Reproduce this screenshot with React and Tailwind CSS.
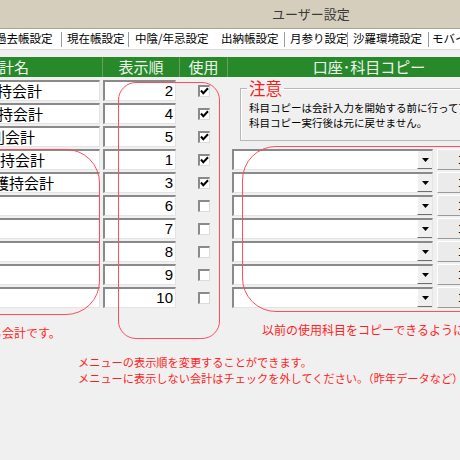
const rows = [
  { name: '本堂維持会計', shift: '-ml-[10px]', order: 2, used: true },
  { name: '墓地維持会計', shift: '-ml-[9px]', order: 4, used: true },
  { name: '特別会計', shift: 'ml-[13px]', order: 5, used: true },
  { name: '寺院維持会計', shift: '-ml-[7px]', order: 1, used: true },
  { name: '本山護持会計', shift: 'ml-[2px]', order: 3, used: true },
  { name: '', shift: '', order: 6, used: false },
  { name: '', shift: '', order: 7, used: false },
  { name: '', shift: '', order: 8, used: false },
  { name: '', shift: '', order: 9, used: false },
  { name: '', shift: '', order: 10, used: false },
]

const sunken =
  'bg-white border-t-2 border-l-2 border-b border-r border-t-[#8a8a8a] border-l-[#8a8a8a] border-b-[#e4e4e4] border-r-[#e4e4e4]'

const Sep = () => <span className="w-px h-[15px] bg-[#9c9c9c] shrink-0" />

const Check = ({ on }) => (
  <span className="w-[12px] h-[12px] bg-white border-t-2 border-l-2 border-b border-r border-t-[#8a8a8a] border-l-[#8a8a8a] border-b-[#dcdcdc] border-r-[#dcdcdc] flex items-center justify-center">
    {on && (
      <svg width="9" height="8" viewBox="0 0 9 8">
        <path d="M1 3.5 L3.3 6.3 L8 1.2" stroke="#000" strokeWidth="2" fill="none" />
      </svg>
    )}
  </span>
)

const Combo = () => (
  <div className="col-start-4 flex">
    <div className={`w-[201px] h-[21px] flex justify-end ${sunken}`}>
      <div className="w-[15px] h-full bg-[#f0f0f0] border-l border-b border-l-white border-b-[#6e6e6e] flex items-center justify-center">
        <svg width="7" height="4" viewBox="0 0 7 4">
          <path d="M0 0H7L3.5 4Z" fill="#000" />
        </svg>
      </div>
    </div>
    <button className="ml-[4px] w-[60px] h-[21px] bg-[#ebebeb] border-t border-l border-b border-r border-t-white border-l-white border-b-[#9a9a9a] border-r-[#9a9a9a] pl-[19px] text-left text-[12px] leading-none">
      コピー
    </button>
  </div>
)

export default function App() {
  return (
    <div className="relative w-[460px] h-[460px] overflow-hidden bg-[#f0f0f0] text-black font-['Noto_Sans_CJK_JP',sans-serif]">
      {/* title bar */}
      <div className="h-[29px] bg-[#d5cebc] border-b border-b-[#aaa493] flex items-center pl-[272px] text-[13px] text-[#3a3a3a]">
        ユーザー設定
      </div>

      {/* tabs */}
      <div className="h-[21px] bg-white border-b border-b-[#dadada] flex items-center text-[11.5px] whitespace-nowrap">
        <span className="-ml-[5px] w-[66px] shrink-0">過去帳設定</span>
        <Sep />
        <span className="w-[66px] pl-[5px] shrink-0">現在帳設定</span>
        <Sep />
        <span className="w-[86px] pl-[6px] shrink-0">中陰/年忌設定</span>
        <span className="w-[69px] pl-[6px] shrink-0">出納帳設定</span>
        <Sep />
        <span className="w-[62px] pl-[5px] shrink-0">月参り設定</span>
        <Sep />
        <span className="w-[80px] pl-[5px] shrink-0">沙羅環境設定</span>
        <Sep />
        <span className="pl-[3px] shrink-0">モバイル設定</span>
      </div>

      {/* column header */}
      <div className="-ml-[40px] mt-[7px] h-[20px] flex items-center bg-[#28892a] text-[15px] text-[#eef6ee] whitespace-nowrap">
        <div className="w-[142px] pl-[24px] shrink-0">会計名</div>
        <span className="w-px h-full bg-[#6e9a66] shrink-0" />
        <div className="w-[76px] text-center shrink-0">表示順</div>
        <span className="w-px h-full bg-[#6e9a66] shrink-0" />
        <div className="w-[47px] text-center shrink-0">使用</div>
        <span className="w-px h-full bg-[#6e9a66] shrink-0" />
        <div className="w-[282px] text-center shrink-0">口座･科目コピー</div>
      </div>

      {/* rows */}
      <div className="-ml-[40px] mt-[3px] grid grid-cols-[143px_73px_56px_300px] grid-rows-[repeat(10,21px)] gap-y-[2px]">
        <div className="col-start-4 row-start-1 row-span-3">
          <fieldset className="ml-[8px] w-[300px] h-[61px] border border-[#b8b8b8] shadow-[inset_1px_1px_0_#ffffff] pl-[8px]">
            <legend className="-ml-[2px] px-[2px] text-[16.5px] leading-[16px] text-[#ff1a1a]">注意</legend>
            <div className="pt-[4px] text-[10.5px] leading-[15px] whitespace-nowrap">
              <p>科目コピーは会計入力を開始する前に行って下さい。</p>
              <p>科目コピー実行後は元に戻せません。</p>
            </div>
          </fieldset>
        </div>
        {rows.map((r, i) => (
          <div key={r.order} className="contents">
            <div className={`col-start-1 w-[140px] h-[21px] flex items-center overflow-hidden text-[15px] whitespace-nowrap ${sunken}`}>
              <span className={`block ${r.shift}`}>{r.name}</span>
            </div>
            <div className={`col-start-2 w-[73px] h-[21px] flex items-center justify-end pr-[2px] text-[15px] font-['Liberation_Sans',sans-serif] ${sunken}`}>
              {r.order}
            </div>
            <div className="col-start-3 flex items-center pl-[22px]">
              <Check on={r.used} />
            </div>
            {i >= 3 && <Combo />}
          </div>
        ))}
      </div>

      {/* notes */}
      <div className="mt-[14px] flex text-[12px] leading-[16px] text-[#ff1f1f] whitespace-nowrap">
        <div className="w-[262px] pt-[3px] shrink-0">
          <span className="block -ml-[46px]">使用する会計です。</span>
        </div>
        <div className="shrink-0">以前の使用科目をコピーできるようにしています。</div>
      </div>
      <div className="mt-[13px] pl-[78px] text-[11.2px] leading-[16px] text-[#ff1f1f] whitespace-nowrap">
        <p>メニューの表示順を変更することができます。</p>
        <p>メニューに表示しない会計はチェックを外してください。（昨年データなど）</p>
      </div>

      {/* red annotation frames */}
      <div className="pointer-events-none absolute left-[118px] top-[82px] w-[102px] h-[257px] rounded-[18px] border-[1.5px] border-[#ff4d5e]" />
      <div className="pointer-events-none absolute -left-[30px] top-[149px] w-[130px] h-[166px] rounded-r-[34px] border-[1.5px] border-[#ff4d5e]" />
      <div className="pointer-events-none absolute left-[242px] top-[146px] w-[260px] h-[166px] rounded-l-[34px] border-[1.5px] border-[#ff4d5e]" />
    </div>
  )
}
